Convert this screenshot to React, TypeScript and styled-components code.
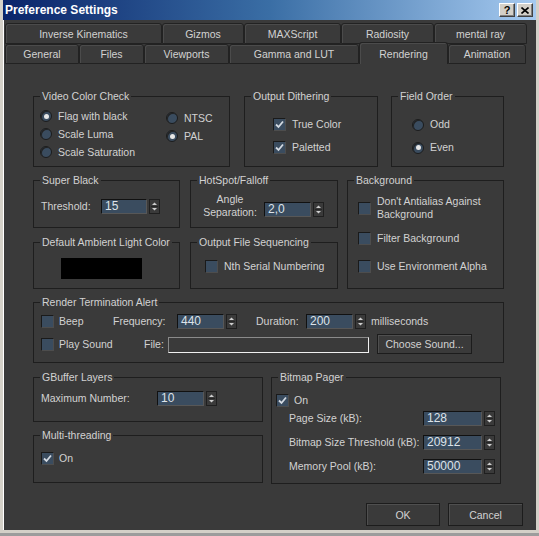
import React from 'react'
import styled, { createGlobalStyle } from 'styled-components'

const GlobalStyle = createGlobalStyle`
    html, body {
        margin: 0;
        padding: 0;
        background: #9c9c9c;
    }
    body {
        font-family: 'Liberation Sans', Arial, sans-serif;
        font-size: 11px;
    }
`

const Window = styled.div`
    box-sizing: border-box;
    width: 539px;
    height: 533px;
    background: #3a3a3a;
    border: 3px solid #d4d0c8;
    border-top: none;
    box-shadow: inset 1px 0 0 #ffffff;
    display: flex;
    flex-direction: column;
`

const TitleBar = styled.div`
    height: 20px;
    flex: none;
    display: flex;
    align-items: center;
    padding-left: 2px;
    padding-right: 3px;
    background: linear-gradient(to right, #0a246a 0%, #3a6ea5 50%, #a6caf0 100%);
`

const Title = styled.div`
    flex: 1;
    color: #ffffff;
    font-family: 'Liberation Sans', Arial, sans-serif;
    font-weight: 700;
    font-size: 12px;
`

const CaptionButton = styled.div`
    box-sizing: border-box;
    width: 16px;
    height: 14px;
    margin-left: 2px;
    background: #d4d0c8;
    border: 1px solid;
    border-color: #ffffff #404040 #404040 #ffffff;
    box-shadow: inset -1px -1px 0 #808080;
    color: #000;
    font-weight: 700;
    font-size: 11px;
    line-height: 12px;
    text-align: center;
    display: flex;
    align-items: center;
    justify-content: center;
`

const TabRow = styled.div<{ $h: number; $top?: number }>`
    display: flex;
    height: ${p => p.$h}px;
    margin-top: ${p => p.$top ?? 0}px;
    padding-left: 2px;
    flex: none;
`

const Tab = styled.div<{ $w: number; $active?: boolean }>`
    box-sizing: border-box;
    width: ${p => p.$w}px;
    height: ${p => (p.$active ? 'calc(100% + 2px)' : '100%')};
    margin-top: ${p => (p.$active ? -2 : 0)}px;
    border: 1px solid #222222;
    border-bottom: ${p => (p.$active ? 'none' : '1px solid #222222')};
    border-radius: 3px 3px 0 0;
    box-shadow: inset 1px 1px 0 #4b4b4b;
    background: #3a3a3a;
    color: #d2d2d2;
    font-size: 10.5px;
    display: flex;
    align-items: center;
    justify-content: center;
    position: relative;
    z-index: ${p => (p.$active ? 1 : 0)};
`

const Panel = styled.div`
    display: flex;
    flex-direction: column;
    padding: 26px 32px 0 30px;
`

const Row = styled.div<{ $top?: number; $gap?: number }>`
    display: flex;
    align-items: flex-start;
    gap: ${p => p.$gap ?? 0}px;
    margin-top: ${p => p.$top ?? 0}px;
`

const Column = styled.div<{ $gap?: number }>`
    display: flex;
    flex-direction: column;
    gap: ${p => p.$gap ?? 0}px;
`

const Group = styled.fieldset<{ $w: number; $h: number }>`
    box-sizing: border-box;
    width: ${p => p.$w}px;
    height: ${p => p.$h}px;
    margin: 0;
    padding: 0;
    min-width: 0;
    border: 1px solid #1e1e1e;
    flex: none;
`

const Legend = styled.legend`
    margin-left: 6px;
    padding: 0 2px;
    color: #d2d2d2;
    font-size: 10.5px;
    line-height: 13px;
`

const Body = styled.div<{ $pt: number; $pl: number; $row?: boolean; $gap?: number }>`
    display: flex;
    flex-direction: ${p => (p.$row ? 'row' : 'column')};
    gap: ${p => p.$gap ?? 0}px;
    padding-top: ${p => p.$pt}px;
    padding-left: ${p => p.$pl}px;
`

const Line = styled.div<{ $h?: number; $top?: number; $indent?: number }>`
    display: flex;
    align-items: center;
    height: ${p => (p.$h ? `${p.$h}px` : 'auto')};
    margin-top: ${p => p.$top ?? 0}px;
    padding-left: ${p => p.$indent ?? 0}px;
`

const Text = styled.span<{ $w?: number; $center?: boolean }>`
    color: #d2d2d2;
    font-size: 10.5px;
    line-height: 13px;
    white-space: nowrap;
    flex: none;
    width: ${p => (p.$w ? `${p.$w}px` : 'auto')};
    text-align: ${p => (p.$center ? 'center' : 'left')};
`

const Box = styled.span<{ $gap?: number }>`
    box-sizing: border-box;
    width: 13px;
    height: 13px;
    flex: none;
    margin-right: ${p => p.$gap ?? 6}px;
    background: #3a4c5f;
    border: 1px solid;
    border-color: #1a1a1a #4d4d4d #4d4d4d #1a1a1a;
    display: flex;
    align-items: center;
    justify-content: center;
`

const Radio = styled.span<{ $on?: boolean }>`
    box-sizing: border-box;
    width: 12px;
    height: 12px;
    flex: none;
    margin-right: 6px;
    border-radius: 50%;
    background: #3a4c5f;
    border: 1px solid #1c1c1c;
    box-shadow: inset 1px 1px 0 #232323;
    display: flex;
    align-items: center;
    justify-content: center;
    &::after {
        content: '';
        display: ${p => (p.$on ? 'block' : 'none')};
        width: 5px;
        height: 5px;
        border-radius: 50%;
        background: #e6e6e6;
    }
`

const Field = styled.div<{ $w: number }>`
    box-sizing: border-box;
    width: ${p => p.$w}px;
    height: 15px;
    flex: none;
    background: #3a4c5f;
    border: 1px solid;
    border-color: #111111 #575757 #575757 #111111;
    color: #dde3ea;
    font-size: 12px;
    line-height: 13px;
    padding-left: 3px;
`

const ArrowBox = styled.div`
    box-sizing: border-box;
    width: 11px;
    height: 15px;
    flex: none;
    margin-left: 2px;
    border: 1px solid #1f1f1f;
    background: #3a3a3a;
    display: flex;
`

const SpinWrap = styled.div<{ $top?: number; $left?: number }>`
    display: flex;
    align-items: center;
    flex: none;
    margin-top: ${p => p.$top ?? 0}px;
    margin-left: ${p => p.$left ?? 0}px;
`

const FileBox = styled.div`
    box-sizing: border-box;
    width: 201px;
    height: 16px;
    flex: none;
    margin-top: 3px;
    background: #3a3a3a;
    border: 1px solid;
    border-color: #8a8a8a #f0f0f0 #f0f0f0 #8a8a8a;
`

const Swatch = styled.div`
    width: 81px;
    height: 21px;
    background: #000000;
`

const Button = styled.div<{ $w: number; $h: number; $left?: number }>`
    box-sizing: border-box;
    width: ${p => p.$w}px;
    height: ${p => p.$h}px;
    margin-left: ${p => p.$left ?? 0}px;
    flex: none;
    background: #3a3a3a;
    border: 1px solid #1c1c1c;
    box-shadow: inset 1px 1px 0 #4f4f4f;
    color: #d2d2d2;
    font-size: 10.5px;
    display: flex;
    align-items: center;
    justify-content: center;
`

const Footer = styled.div`
    display: flex;
    justify-content: flex-end;
    gap: 8px;
    margin-top: 19px;
    padding-right: 13px;
`

const Spinner = ({ value, w, top, left }: { value: string; w: number; top?: number; left?: number }) => (
    <SpinWrap $top={top} $left={left}>
        <Field $w={w}>{value}</Field>
        <ArrowBox>
            <svg width="9" height="13" viewBox="0 0 9 13">
                <polygon points="2,5 7,5 4.5,2.5" fill="#cfcfcf" />
                <line x1="1" y1="6.5" x2="8" y2="6.5" stroke="#262626" />
                <polygon points="2,8 7,8 4.5,10.5" fill="#cfcfcf" />
            </svg>
        </ArrowBox>
    </SpinWrap>
)

const Check = ({ on, gap }: { on?: boolean; gap?: number }) => (
    <Box $gap={gap}>
        {on && (
            <svg width="11" height="11" viewBox="0 0 11 11">
                <polyline points="2,5.5 4.5,8 9,2.5" fill="none" stroke="#d4dae2" strokeWidth="1.8" />
            </svg>
        )}
    </Box>
)

const tabsTop = [
    { label: 'Inverse Kinematics', w: 157 },
    { label: 'Gizmos', w: 82 },
    { label: 'MAXScript', w: 97 },
    { label: 'Radiosity', w: 93 },
    { label: 'mental ray', w: 93 },
]

const tabsBottom = [
    { label: 'General', w: 74 },
    { label: 'Files', w: 65 },
    { label: 'Viewports', w: 85 },
    { label: 'Gamma and LUT', w: 130 },
    { label: 'Rendering', w: 89, active: true },
    { label: 'Animation', w: 78 },
]

const App = () => {
    return (
        <>
            <GlobalStyle />
            <Window>
                <TitleBar>
                    <Title>Preference Settings</Title>
                    <CaptionButton>?</CaptionButton>
                    <CaptionButton>
                        <svg width="8" height="7" viewBox="0 0 8 7">
                            <path d="M0.5 0.5 L7.5 6.5 M7.5 0.5 L0.5 6.5" stroke="#000" strokeWidth="1.6" />
                        </svg>
                    </CaptionButton>
                </TitleBar>

                <TabRow $h={21} $top={3}>
                    {tabsTop.map(t => (
                        <Tab key={t.label} $w={t.w}>{t.label}</Tab>
                    ))}
                </TabRow>
                <TabRow $h={20}>
                    {tabsBottom.map(t => (
                        <Tab key={t.label} $w={t.w} $active={t.active}>{t.label}</Tab>
                    ))}
                </TabRow>

                <Panel>
                    <Row>
                        <Group $w={197} $h={77}>
                            <Legend>Video Color Check</Legend>
                            <Body $row $pt={4} $pl={6}>
                                <Column>
                                    <Line $h={18} style={{ width: 126 }}><Radio $on /><Text>Flag with black</Text></Line>
                                    <Line $h={18}><Radio /><Text>Scale Luma</Text></Line>
                                    <Line $h={18}><Radio /><Text>Scale Saturation</Text></Line>
                                </Column>
                                <Column>
                                    <Line $h={18} $top={2}><Radio /><Text>NTSC</Text></Line>
                                    <Line $h={18}><Radio $on /><Text>PAL</Text></Line>
                                </Column>
                            </Body>
                        </Group>
                        <Group $w={134} $h={77} style={{ marginLeft: 14 }}>
                            <Legend>Output Dithering</Legend>
                            <Body $pt={10} $pl={28}>
                                <Line $h={23}><Check on /><Text>True Color</Text></Line>
                                <Line $h={23}><Check on /><Text>Paletted</Text></Line>
                            </Body>
                        </Group>
                        <Group $w={113} $h={77} style={{ marginLeft: 13 }}>
                            <Legend>Field Order</Legend>
                            <Body $pt={10} $pl={20}>
                                <Line $h={23}><Radio /><Text>Odd</Text></Line>
                                <Line $h={23}><Radio $on /><Text>Even</Text></Line>
                            </Body>
                        </Group>
                    </Row>

                    <Row $top={7}>
                        <Column $gap={8}>
                            <Row $gap={10}>
                                <Group $w={147} $h={54}>
                                    <Legend>Super Black</Legend>
                                    <Body $pt={11} $pl={7}>
                                        <Line $h={16}>
                                            <Text $w={60}>Threshold:</Text>
                                            <Spinner value="15" w={46} />
                                        </Line>
                                    </Body>
                                </Group>
                                <Group $w={148} $h={54}>
                                    <Legend>HotSpot/Falloff</Legend>
                                    <Body $pt={6} $pl={10}>
                                        <Line>
                                            <Text $w={58} $center>Angle<br />Separation:</Text>
                                            <Spinner value="2,0" w={47} top={6} left={5} />
                                        </Line>
                                    </Body>
                                </Group>
                            </Row>
                            <Row $gap={10}>
                                <Group $w={147} $h={53}>
                                    <Legend>Default Ambient Light Color</Legend>
                                    <Body $pt={9} $pl={27}>
                                        <Swatch />
                                    </Body>
                                </Group>
                                <Group $w={148} $h={53}>
                                    <Legend>Output File Sequencing</Legend>
                                    <Body $pt={9} $pl={14}>
                                        <Line $h={16}><Check /><Text>Nth Serial Numbering</Text></Line>
                                    </Body>
                                </Group>
                            </Row>
                        </Column>
                        <Group $w={157} $h={115} style={{ marginLeft: 9 }}>
                            <Legend>Background</Legend>
                            <Body $pt={8} $pl={10}>
                                <Line><Check /><Text>Don't Antialias Against<br />Background</Text></Line>
                                <Line $h={16} $top={9}><Check /><Text>Filter Background</Text></Line>
                                <Line $h={16} $top={12}><Check /><Text>Use Environment Alpha</Text></Line>
                            </Body>
                        </Group>
                    </Row>

                    <Row $top={7}>
                        <Group $w={471} $h={67}>
                            <Legend>Render Termination Alert</Legend>
                            <Body $pt={4} $pl={7}>
                                <Line $h={16}>
                                    <Line style={{ width: 72 }}><Check gap={5} /><Text>Beep</Text></Line>
                                    <Text $w={64}>Frequency:</Text>
                                    <Spinner value="440" w={47} />
                                    <Text $w={50} style={{ marginLeft: 19 }}>Duration:</Text>
                                    <Spinner value="200" w={47} />
                                    <Text style={{ marginLeft: 5 }}>milliseconds</Text>
                                </Line>
                                <Line $h={20} $top={5} style={{ alignItems: 'flex-start' }}>
                                    <Line $h={20} style={{ width: 103 }}><Check gap={5} /><Text>Play Sound</Text></Line>
                                    <Line $h={20}><Text $w={24}>File:</Text></Line>
                                    <FileBox />
                                    <Button $w={95} $h={20} $left={8}>Choose Sound...</Button>
                                </Line>
                            </Body>
                        </Group>
                    </Row>

                    <Row $top={8} $gap={8}>
                        <Column $gap={7}>
                            <Group $w={230} $h={51}>
                                <Legend>GBuffer Layers</Legend>
                                <Body $pt={6} $pl={7}>
                                    <Line $h={16}>
                                        <Text $w={116}>Maximum Number:</Text>
                                        <Spinner value="10" w={47} />
                                    </Line>
                                </Body>
                            </Group>
                            <Group $w={230} $h={54}>
                                <Legend>Multi-threading</Legend>
                                <Body $pt={8} $pl={7}>
                                    <Line $h={16}><Check on gap={5} /><Text>On</Text></Line>
                                </Body>
                            </Group>
                        </Column>
                        <Group $w={230} $h={113}>
                            <Legend>Bitmap Pager</Legend>
                            <Body $pt={8} $pl={4}>
                                <Line $h={16}><Check on gap={5} /><Text>On</Text></Line>
                                <Line $h={16} $top={2} $indent={13}>
                                    <Text $w={134}>Page Size (kB):</Text>
                                    <Spinner value="128" w={59} />
                                </Line>
                                <Line $h={16} $top={8} $indent={13}>
                                    <Text $w={134}>Bitmap Size Threshold (kB):</Text>
                                    <Spinner value="20912" w={59} />
                                </Line>
                                <Line $h={16} $top={8} $indent={13}>
                                    <Text $w={134}>Memory Pool (kB):</Text>
                                    <Spinner value="50000" w={59} />
                                </Line>
                            </Body>
                        </Group>
                    </Row>
                </Panel>

                <Footer>
                    <Button $w={74} $h={23}>OK</Button>
                    <Button $w={75} $h={23}>Cancel</Button>
                </Footer>
            </Window>
        </>
    )
}

export default App
